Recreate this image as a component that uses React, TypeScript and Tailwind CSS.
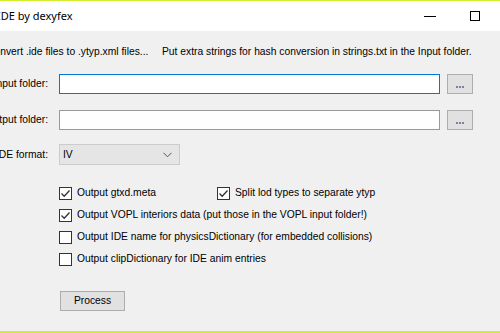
import React, {useState} from 'react'

type Opt = {label: string; checked: boolean}

const ui = {fontFamily: '"Liberation Sans", Arial, sans-serif'}

const CheckBox = ({label, checked, onToggle}: Opt & {onToggle: () => void}) => (
  <label className="flex items-center h-[22px] cursor-default select-none" onClick={onToggle}>
    <span className="w-[13px] h-[13px] border border-[#333333] bg-white flex items-center justify-center shrink-0">
      {checked && (
        <svg width="11" height="11" viewBox="0 0 11 11">
          <path d="M1.5 5.5 L4.2 8.2 L9.5 2.5" fill="none" stroke="#333333" strokeWidth="1.3" />
        </svg>
      )}
    </span>
    <span className="ml-[5px] text-[10.3px] text-black whitespace-nowrap">{label}</span>
  </label>
)

const FolderRow = ({label, focused}: {label: string; focused?: boolean}) => (
  <div className="flex items-center h-[20px]">
    <div className="w-[68px] flex justify-end shrink-0">
      <span className="text-[10.3px] whitespace-nowrap">{label}</span>
    </div>
    <input
      className={
        'ml-[11px] w-[381px] h-[20px] bg-white outline-none px-1 text-[11px] border shrink-0 ' +
        (focused ? 'border-[#0078d7]' : 'border-[#9a9a9a]')
      }
    />
    <button className="ml-[7px] w-[26px] h-[20px] bg-[#e1e1e1] border border-[#adadad] flex items-end justify-center pb-[5px] shrink-0">
      <span className="flex gap-[1px]">
        <span className="w-[2px] h-[2px] bg-[#8a7a9a]" />
        <span className="w-[2px] h-[2px] bg-[#8a7a9a]" />
        <span className="w-[2px] h-[2px] bg-[#8a7a9a]" />
      </span>
    </button>
  </div>
)

export default function App() {
  const [opts, setOpts] = useState<Opt[]>([
    {label: 'Output gtxd.meta', checked: true},
    {label: 'Split lod types to separate ytyp', checked: true},
    {label: 'Output VOPL interiors data (put those in the VOPL input folder!)', checked: true},
    {label: 'Output IDE name for physicsDictionary (for embedded collisions)', checked: false},
    {label: 'Output clipDictionary for IDE anim entries', checked: false},
  ])

  const toggle = (i: number) =>
    setOpts(opts.map((o, j) => (j === i ? {...o, checked: !o.checked} : o)))

  return (
    <div className="w-[500px] h-[333px] overflow-hidden bg-[#f0f0f0]" style={ui}>
      <div className="w-[540px] h-[333px] -ml-[20px] flex flex-col">
        <div className="h-[1px] bg-[#d2ec2e]" />

        {/* title bar */}
        <div className="h-[30px] bg-white flex items-center">
          <span
            className="ml-[17px] text-[11px] text-black"
            style={{fontFamily: '"Noto Sans", "Open Sans", sans-serif'}}
          >
            IDE by dexyfex
          </span>
          <div className="ml-auto flex items-center mr-[40px]">
            <span className="w-[12px] h-[1px] bg-black mr-[34px]" />
            <span className="w-[10px] h-[10px] border border-black" />
          </div>
        </div>

        {/* body */}
        <div className="flex-1 flex flex-col text-black">
          <div className="mt-[14px] h-[13px] flex items-center text-[10.3px] leading-[13px] whitespace-nowrap">
            <span className="ml-[7px] w-[175px] shrink-0">Convert .ide files to .ytyp.xml files...</span>
            <span className="shrink-0">Put extra strings for hash conversion in strings.txt in the Input folder.</span>
          </div>

          <div className="mt-[16px]">
            <FolderRow label="Input folder:" focused />
          </div>
          <div className="mt-[16px]">
            <FolderRow label="Output folder:" />
          </div>

          <div className="mt-[14px] flex items-center h-[21px]">
            <div className="w-[68px] flex justify-end shrink-0">
              <span className="text-[10.3px] whitespace-nowrap">IDE format:</span>
            </div>
            <div className="ml-[11px] w-[121px] h-[21px] bg-[#e5e5e5] border border-[#cccccc] flex items-center pl-[3px] pr-[7px]">
              <span className="text-[10.3px]">IV</span>
              <svg className="ml-auto" width="9" height="6" viewBox="0 0 9 6">
                <path d="M0.5 0.8 L4.5 4.8 L8.5 0.8" fill="none" stroke="#555555" strokeWidth="1" />
              </svg>
            </div>
          </div>

          <div className="mt-[17px] ml-[79px] flex flex-col">
            <div className="flex">
              <div className="w-[158px]">
                <CheckBox {...opts[0]} onToggle={() => toggle(0)} />
              </div>
              <CheckBox {...opts[1]} onToggle={() => toggle(1)} />
            </div>
            <CheckBox {...opts[2]} onToggle={() => toggle(2)} />
            <CheckBox {...opts[3]} onToggle={() => toggle(3)} />
            <CheckBox {...opts[4]} onToggle={() => toggle(4)} />
          </div>

          <div className="mt-[17px] ml-[80px]">
            <button className="w-[65px] h-[20px] bg-[#e1e1e1] border border-[#adadad] text-[10.3px] text-black">
              Process
            </button>
          </div>

          <div className="flex-1" />
        </div>

        <div className="h-[2px] bg-[#d2ec2e]" />
      </div>
    </div>
  )
}
